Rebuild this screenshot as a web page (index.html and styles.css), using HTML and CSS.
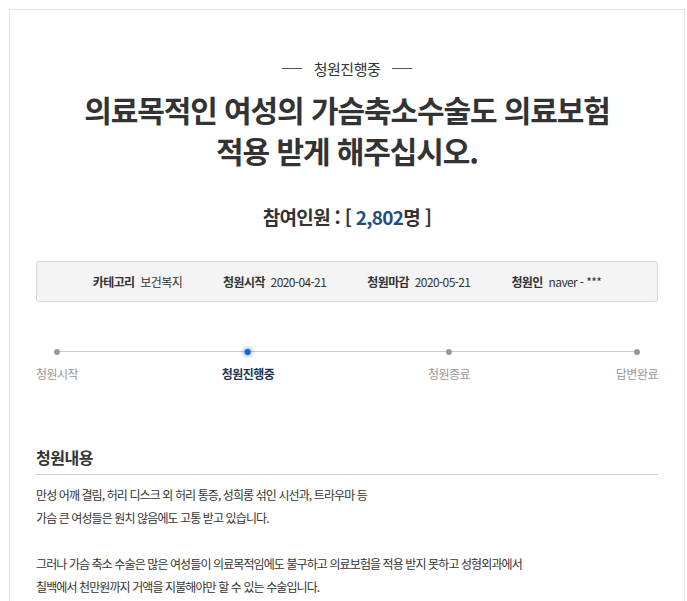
FILE: index.html
```html
<!DOCTYPE html>
<html lang="ko">
<head>
<meta charset="utf-8">
<title>청원</title>
<link rel="stylesheet" href="styles.css">
</head>
<body>
<div class="card">
  <div class="status"><span class="status-text">청원진행중</span></div>
  <h1 class="title">의료목적인 여성의 가슴축소수술도 의료보험<br>적용 받게 해주십시오.</h1>
  <div class="count">참여인원 : [ <span class="num">2,802</span>명 ]</div>
  <ul class="info">
    <li><b>카테고리</b> 보건복지</li>
    <li><b>청원시작</b> 2020-04-21</li>
    <li><b>청원마감</b> 2020-05-21</li>
    <li><b>청원인</b> naver - ***</li>
  </ul>
  <div class="timeline">
    <div class="track"></div>
    <div class="step s1"><span class="dot"></span><span class="label">청원시작</span></div>
    <div class="step s2 active"><span class="dot"></span><span class="label">청원진행중</span></div>
    <div class="step s3"><span class="dot"></span><span class="label">청원종료</span></div>
    <div class="step s4"><span class="dot"></span><span class="label">답변완료</span></div>
  </div>
  <h2 class="section">청원내용</h2>
  <div class="content">
    <p>만성 어깨 결림, 허리 디스크 외 허리 통증, 성희롱 섞인 시선과, 트라우마 등</p>
    <p>가슴 큰 여성들은 원치 않음에도 고통 받고 있습니다.</p>
    <p>&nbsp;</p>
    <p>그러나 가슴 축소 수술은 많은 여성들이 의료목적임에도 불구하고 의료보험을 적용 받지 못하고 성형외과에서</p>
    <p>칠백에서 천만원까지 거액을 지불해야만 할 수 있는 수술입니다.</p>
  </div>
</div>
</body>
</html>
```
FILE: styles.css
```css
html, body { margin: 0; padding: 0; background: #fff; }
body { font-family: "Noto Sans CJK KR", "Noto Sans", sans-serif; color: #333; }
.card {
  margin: 9px 0 0 9px;
  width: 622px;
  height: 600px;
  border: 1px solid #e2e2e2;
  border-bottom: 0;
  padding: 0 26px;
  overflow: hidden;
}
.status {
  margin-top: 46px;
  height: 24px;
  display: flex; justify-content: center; align-items: center; gap: 12px;
  font-size: 15px; color: #333; letter-spacing: -0.5px;
}
.status::before, .status::after { content: ""; width: 20px; height: 1px; background: #555; }
.title {
  margin: 9px 0 0; text-align: center;
  font-size: 30px; line-height: 41px; font-weight: 700; color: #333;
  letter-spacing: -1.1px;
}
.count { margin-top: 33px; text-align: center; font-size: 19px; font-weight: 700; line-height: 26px; letter-spacing: -0.7px; }
.num { color: #1e4d80; }
.info {
  list-style: none; margin: 31px 0 0; padding: 0;
  height: 39px; border: 1px solid #d8d8d8; border-radius: 3px; background: #f4f4f4;
  display: flex; justify-content: center; align-items: center; gap: 41px;
  font-size: 12px; letter-spacing: -0.6px;
}
.info b { font-weight: 700; margin-right: 3px; }
.timeline { position: relative; margin-top: 42px; height: 50px; }
.track { position: absolute; left: 20px; right: 20px; top: 7px; height: 1px; background: #ccc; }
.step { position: absolute; top: 0; display: flex; flex-direction: column; align-items: center; }
.dot { width: 6px; height: 6px; border-radius: 50%; background: #999; margin-top: 5px; position: relative; }
.active .dot { background: #1467c9; box-shadow: 0 0 3px 2px rgba(20,103,201,0.35); }
.label { margin-top: 10px; font-size: 12px; color: #999; white-space: nowrap; letter-spacing: -0.5px; }
.active .label { color: #1b3553; font-weight: 700; }
.s1 { left: 0; }
.s2 { left: 212px; transform: translateX(-50%); }
.s3 { left: 413px; transform: translateX(-50%); }
.s4 { right: 0; }
.section { margin: 51px 0 0; font-size: 16px; font-weight: 700; line-height: 24px; padding-bottom: 5px; border-bottom: 1px solid #ccc; letter-spacing: -0.5px; }
.content { padding-top: 8px; font-size: 12px; line-height: 23px; letter-spacing: -0.9px; }
.content p { margin: 0; }
```
